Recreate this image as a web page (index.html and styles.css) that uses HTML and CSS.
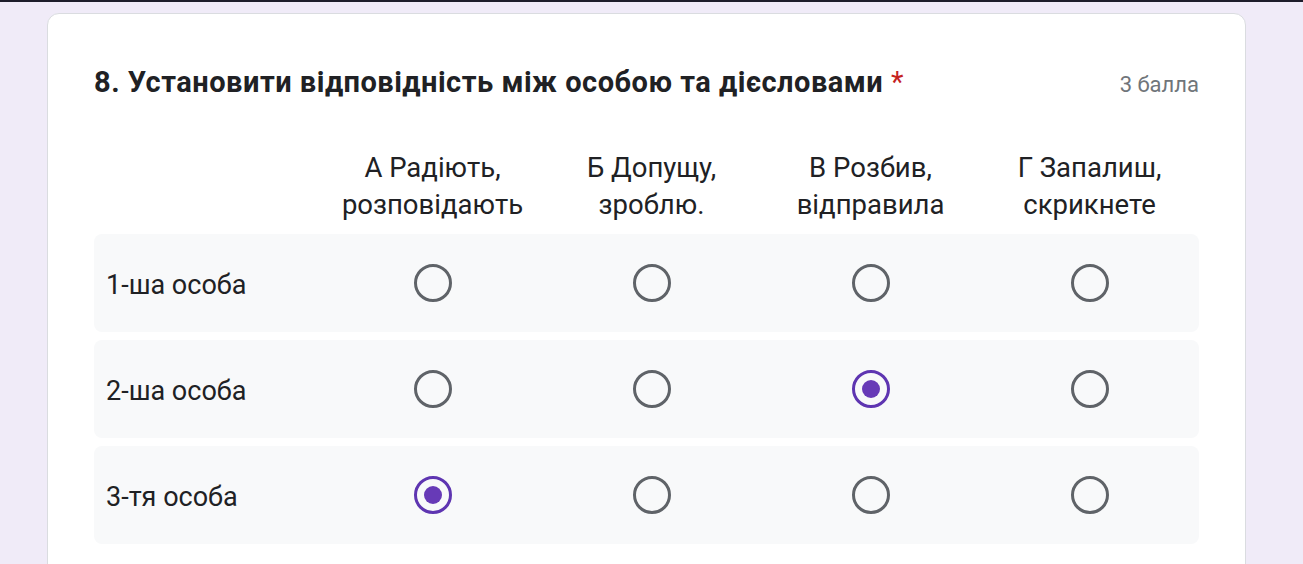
FILE: index.html
```html
<!DOCTYPE html>
<html lang="uk">
<head>
<meta charset="utf-8">
<link rel="stylesheet" href="styles.css">
</head>
<body>
<div class="card">
  <div class="head">
    <div class="title">8. Установити відповідність між особою та дієсловами <span class="req">*</span></div>
    <div class="points">3 балла</div>
  </div>
  <div class="grid">
    <div class="colhead"></div>
    <div class="colhead">А Радіють,<br>розповідають</div>
    <div class="colhead">Б Допущу,<br>зроблю.</div>
    <div class="colhead">В Розбив,<br>відправила</div>
    <div class="colhead">Г Запалиш,<br>скрикнете</div>

    <div class="row">
      <div class="label">1-ша особа</div>
      <div class="cell"><span class="radio"></span></div>
      <div class="cell"><span class="radio"></span></div>
      <div class="cell"><span class="radio"></span></div>
      <div class="cell"><span class="radio"></span></div>
    </div>
    <div class="row">
      <div class="label">2-ша особа</div>
      <div class="cell"><span class="radio"></span></div>
      <div class="cell"><span class="radio"></span></div>
      <div class="cell"><span class="radio checked"></span></div>
      <div class="cell"><span class="radio"></span></div>
    </div>
    <div class="row">
      <div class="label">3-тя особа</div>
      <div class="cell"><span class="radio checked"></span></div>
      <div class="cell"><span class="radio"></span></div>
      <div class="cell"><span class="radio"></span></div>
      <div class="cell"><span class="radio"></span></div>
    </div>
  </div>
</div>
</body>
</html>
```
FILE: styles.css
```css
html, body {
  margin: 0;
  padding: 0;
}
body {
  background: #f0ebf8;
  border-top: 2px solid #1e1d2b;
  font-family: Roboto, "Noto Sans", sans-serif;
  color: #202124;
  overflow: hidden;
  height: 562px;
}
.card {
  margin: 11px 0 0 47px;
  width: 1105px;
  background: #fff;
  border: 1px solid #dadce0;
  border-radius: 12px;
  padding: 50px 46px 40px 46px;
}
.head {
  display: flex;
  justify-content: space-between;
  align-items: baseline;
}
.title {
  font-size: 29px;
  font-weight: 700;
  line-height: 36px;
  letter-spacing: 0.5px;
}
.req {
  color: #c5221f;
  font-weight: 400;
}
.points {
  font-size: 22px;
  color: #70757a;
}
.grid {
  margin-top: 49px;
  display: grid;
  grid-template-columns: 229px repeat(4, 1fr);
  row-gap: 8px;
}
.colhead {
  font-size: 27.5px;
  line-height: 37px;
  text-align: center;
  padding-bottom: 3px;
}
.row {
  display: contents;
}
.label, .cell {
  background: #f8f9fa;
  height: 98px;
  display: flex;
  align-items: center;
}
.label {
  font-size: 27px;
  padding: 3px 0 0 12px;
  box-sizing: border-box;
  border-radius: 8px 0 0 8px;
}
.cell {
  justify-content: center;
}
.cell:last-child {
  border-radius: 0 8px 8px 0;
}
.radio {
  box-sizing: border-box;
  width: 38px;
  height: 38px;
  border: 3px solid #5f6368;
  border-radius: 50%;
  display: flex;
  align-items: center;
  justify-content: center;
}
.radio.checked {
  border-color: #5e35b1;
}
.radio.checked::after {
  content: "";
  width: 18px;
  height: 18px;
  border-radius: 50%;
  background: #673ab7;
}
```
